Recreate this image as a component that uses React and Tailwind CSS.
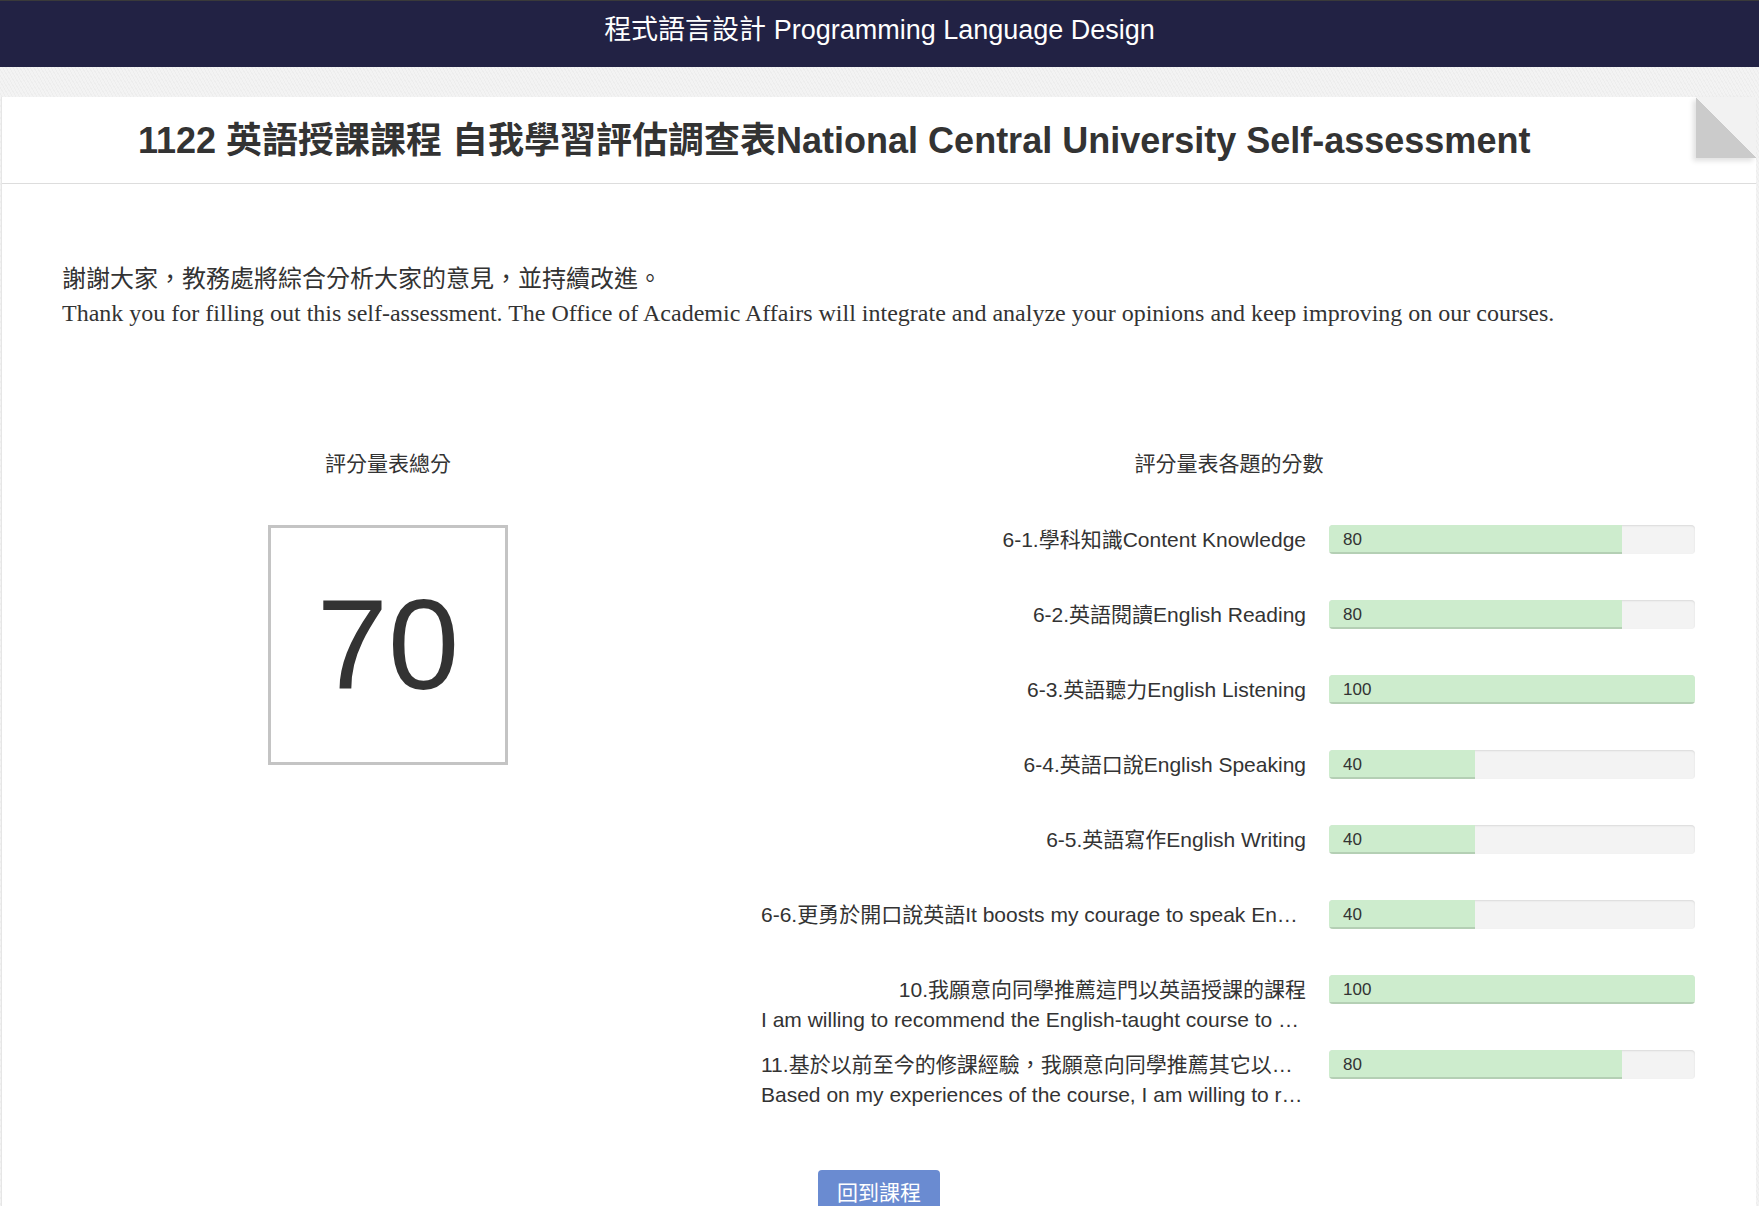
import React from "react";

const sans = "font-['Liberation_Sans','Noto_Sans_CJK_TC',sans-serif]";

const rows = [
  { lines: ["6-1.學科知識Content Knowledge"], score: 80 },
  { lines: ["6-2.英語閱讀English Reading"], score: 80 },
  { lines: ["6-3.英語聽力English Listening"], score: 100 },
  { lines: ["6-4.英語口說English Speaking"], score: 40 },
  { lines: ["6-5.英語寫作English Writing"], score: 40 },
  { lines: ["6-6.更勇於開口說英語It boosts my courage to speak English in public."], score: 40 },
  {
    lines: [
      "10.我願意向同學推薦這門以英語授課的課程",
      "I am willing to recommend the English-taught course to my classmates.",
    ],
    score: 100,
  },
  {
    lines: [
      "11.基於以前至今的修課經驗，我願意向同學推薦其它以英語授課的課程",
      "Based on my experiences of the course, I am willing to recommend other EMI courses.",
    ],
    score: 80,
  },
];

const ScoreRow = ({ lines, score }) => (
  <div className="flex h-[75px] items-start pl-[32px]">
    <div className="w-[545px] text-right text-[21px] text-[#333]">
      {lines.map((l, i) => (
        <div
          key={i}
          className={
            i === 0
              ? "h-[29px] truncate leading-[29px]"
              : "truncate leading-[31px]"
          }
        >
          {l}
        </div>
      ))}
    </div>
    <div className="ml-[23px] h-[29px] w-[366px] shrink-0 overflow-hidden rounded-[4px] bg-[#f3f3f3] shadow-[inset_0_1px_2px_rgba(0,0,0,0.1)]">
      <div
        className="flex h-full items-center bg-[#cdeccd] pl-[14px] text-[17px] text-[#333] shadow-[inset_0_-2px_0_rgba(0,0,0,0.12)]"
        style={{ width: `${score}%` }}
      >
        {score}
      </div>
    </div>
  </div>
);

export default function App() {
  return (
    <div
      className={`min-h-screen bg-[#f1f1f1] bg-[repeating-linear-gradient(60deg,#f3f3f3_0px,#f3f3f3_2px,#ededed_2px,#ededed_3px)] ${sans}`}
    >
      {/* top bar */}
      <div className="flex h-[67px] items-center justify-center border-t border-[#3a3a3a] bg-[#222244] pb-[7px] text-[27px] text-white">
        程式語言設計 Programming Language Design
      </div>

      <div className="h-[30px]" />

      {/* card */}
      <div className="relative ml-[1px] w-[1755px] border-l border-[#e6e6e6] bg-white">
        <div className="flex h-[87px] items-center border-b border-[#dddddd] pl-[136px] pt-[2px] text-[36px] font-bold text-[#333]">
          1122 英語授課課程 自我學習評估調查表National Central University Self-assessment
        </div>
        <div className="absolute right-0 top-0 h-[61px] w-[60px] bg-[linear-gradient(225deg,#f2f2f2_50%,#cbcbcb_50%)] shadow-[-3px_3px_5px_rgba(0,0,0,0.12)]" />

        {/* intro */}
        <div className="pl-[60px] pt-[75px] font-['Liberation_Serif','Noto_Sans_CJK_TC',serif] text-[24px] leading-[36px] text-[#333]">
          <div className="h-[36px] leading-[40px]">
            謝謝大家，教務處將綜合分析大家的意見，並持續改進。
          </div>
          <div>
            Thank you for filling out this self-assessment. The Office of
            Academic Affairs will integrate and analyze your opinions and keep
            improving on our courses.
          </div>
        </div>

        {/* scores */}
        <div className="flex pl-[45px] pt-[117px]">
          <div className="flex w-[682px] flex-col items-center">
            <div className="h-[30px] text-[21px] leading-[32px] text-[#333]">
              評分量表總分
            </div>
            <div className="mt-[47px] flex h-[240px] w-[240px] items-center justify-center border-[3px] border-[#c4c4c4] text-[128px] text-[#333]">
              70
            </div>
          </div>
          <div className="w-[1000px]">
            <div className="h-[30px] text-center text-[21px] leading-[32px] text-[#333]">
              評分量表各題的分數
            </div>
            <div className="mt-[47px]">
              {rows.map((r, i) => (
                <ScoreRow key={i} lines={r.lines} score={r.score} />
              ))}
            </div>
          </div>
        </div>

        <div className="flex justify-center pb-[40px] pt-[45px]">
          <button className="h-[46px] rounded-[4px] bg-[#6a8bd1] px-[19px] text-[21px] text-white">
            回到課程
          </button>
        </div>
      </div>
    </div>
  );
}
